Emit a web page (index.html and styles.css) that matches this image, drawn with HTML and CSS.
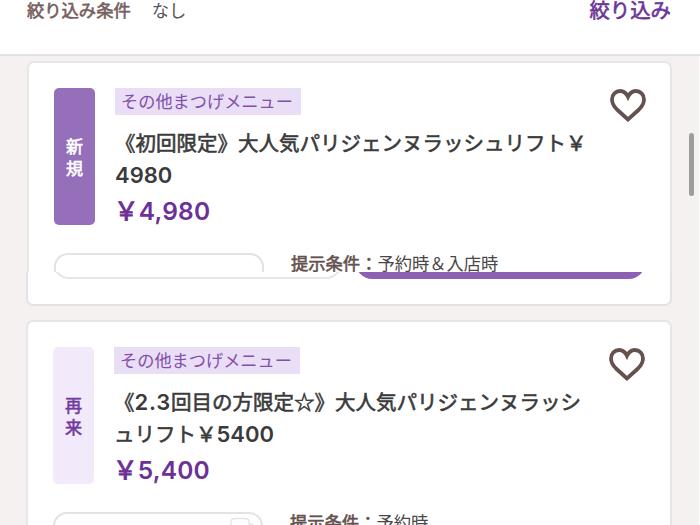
FILE: index.html
```html
<!DOCTYPE html>
<html lang="ja">
<head>
<meta charset="utf-8">
<title>メニュー</title>
<link rel="stylesheet" href="styles.css">
</head>
<body>
<header class="filter">
  <span class="filter-label">絞り込み条件</span>
  <span class="filter-value">なし</span>
  <a class="filter-link">絞り込み</a>
</header>
<main class="list">
  <article class="card card-first">
    <div class="card-top">
      <div class="summary">
        <div class="badge badge-new">新<br>規</div>
        <div class="info">
          <span class="tag">その他まつげメニュー</span>
          <h2 class="title">《初回限定》大人気パリジェンヌラッシュリフト￥<br><span class="num">4980</span></h2>
          <p class="price"><span class="yen">￥</span>4,980</p>
        </div>
        <svg class="heart" viewBox="0 0 36 34"><path d="M18 30.500L7 20.500C3.500 17 2 14 2 10.500C2 5.500 5.600 2 10.200 2C13.500 2 16.300 4.200 18 7.800C19.700 4.200 22.500 2 25.800 2C30.400 2 34 5.500 34 10.500C34 14 32.500 17 29 20.500Z"/></svg>
      </div>
      <div class="details">
        <div class="photo"></div>
        <p class="terms"><b>提示条件：</b>予約時＆入店時</p>
      </div>
    </div>
    <div class="card-bottom">
      <div class="buttons">
        <div class="button button-plain"></div>
        <div class="button button-fill"></div>
      </div>
    </div>
  </article>
  <article class="card card-second">
    <div class="summary">
      <div class="badge badge-repeat">再<br>来</div>
      <div class="info">
        <span class="tag">その他まつげメニュー</span>
        <h2 class="title">《<span class="num wide">2.3</span>回目の方限定☆》大人気パリジェンヌラッシ<br>ュリフト￥<span class="num">5400</span></h2>
        <p class="price"><span class="yen">￥</span>5,400</p>
      </div>
      <svg class="heart" viewBox="0 0 36 34"><path d="M18 30.500L7 20.500C3.500 17 2 14 2 10.500C2 5.500 5.600 2 10.200 2C13.500 2 16.300 4.200 18 7.800C19.700 4.200 22.500 2 25.800 2C30.400 2 34 5.500 34 10.500C34 14 32.500 17 29 20.500Z"/></svg>
    </div>
    <div class="details">
      <div class="photo"><svg class="copy" viewBox="0 0 26 14"><path d="M1 14V5Q1 1.500 4.500 1.500H15.500Q19 1.500 19 5V14M19 7H21Q24 7 24 10V14"/></svg></div>
      <p class="terms"><b>提示条件：</b>予約時</p>
    </div>
  </article>
  <div class="scrollbar"></div>
</main>
</body>
</html>
```
FILE: styles.css
```css
* { box-sizing: border-box; }
body {
  margin: 0;
  width: 700px;
  height: 525px;
  overflow: hidden;
  background: #fff;
  font-family: "Noto Sans CJK JP", sans-serif;
  color: #3b3b3b;
}
.filter {
  display: flex;
  height: 56px;
  padding: 0 29px 0 27px;
  border-bottom: 2px solid #e3e1e4;
  font-size: 17.3px;
  line-height: 20px;
  white-space: nowrap;
}
.filter-label, .filter-link, .title, .badge, .yen, .terms b {
  font-weight: 400;
  -webkit-text-stroke: 0.6px currentColor;
}
.filter-label { color: #75605e; }
.filter-value { margin-left: 21px; color: #555; }
.filter-link { margin-left: auto; font-size: 20.4px; line-height: 19px; color: #6d3497; }
.list {
  position: relative;
  height: 469px;
  margin-right: 1px;
  padding: 5px 0 0 26px;
  background: #f5f1f0;
}
.card { width: 646px; }
.card-first { height: 244px; }
.card-top {
  height: 211px;
  margin-left: 1px;
  padding: 25px 24px 0 25px;
  overflow: hidden;
  background: #fff;
  border: 2px solid #e6e5e8;
  border-bottom: 0;
  border-radius: 7px 7px 0 0;
}
.card-bottom {
  height: 34px;
  padding: 0 25px;
  background: #fff;
  border: 2px solid #e3e2e6;
  border-top: 0;
  border-radius: 0 0 7px 7px;
}
.buttons { display: flex; align-items: flex-end; justify-content: space-between; height: 7px; overflow: hidden; }
.button { width: 289px; height: 40px; border-radius: 16px; }
.button-plain { border: 2px solid #e6e5e8; }
.button-fill { background: #8d60b4; }
.card-second {
  height: 205px;
  margin-top: 15px;
  padding: 25px 24px 0 25px;
  overflow: hidden;
  background: #fff;
  border: 2px solid #e6e5e8;
  border-bottom: 0;
  border-radius: 7px 7px 0 0;
}
.summary { display: flex; height: 138px; }
.badge {
  flex: none;
  width: 41px;
  height: 137px;
  padding-top: 47px;
  border-radius: 5px;
  font-size: 17px;
  line-height: 22px;
  text-align: center;
}
.badge-new { background: #966fba; color: #fff; }
.badge-repeat { background: #f2eafa; color: #713a9c; }
.info { flex: none; width: 480px; margin-left: 20px; white-space: nowrap; }
.tag {
  display: block;
  width: 186px;
  height: 27px;
  padding-left: 6px;
  background: #e9def5;
  color: #8250aa;
  font-size: 17.2px;
  line-height: 25px;
}
.title { margin: 11px 0 0; font-size: 20.5px; line-height: 32px; }
.num, .price { font-family: Inter, "Noto Sans CJK JP", sans-serif; font-weight: 600; }
.num { font-size: 22px; line-height: 20px; -webkit-text-stroke: 0; }
.wide { letter-spacing: 0.8px; }
.price { margin: 5px 0 0; font-size: 24.5px; line-height: 32px; letter-spacing: 0.2px; color: #6c3197; }
.yen { margin-left: -1px; font-family: "Noto Sans CJK JP", sans-serif; line-height: 20px; -webkit-text-stroke-width: 1px; }
.heart { flex: none; width: 36px; height: 34px; margin: 1px 0 0 15px; fill: none; stroke: #65524f; stroke-width: 3.8; }
.details { display: flex; margin-top: 27px; }
.photo { display: flex; justify-content: flex-end; width: 210px; height: 60px; padding-right: 5px; border: 2px solid #e3e2e6; border-radius: 14px; }
.copy { width: 26px; height: 14px; margin-top: 3px; fill: none; stroke: #e7e5e7; stroke-width: 1.5; }
.terms { margin: 0 0 0 27px; font-size: 17.3px; line-height: 20px; color: #4b4747; white-space: nowrap; }
.terms b { color: #65514f; }
.scrollbar { position: absolute; top: 77px; right: 5px; width: 5px; height: 63px; border-radius: 3px; background: #9f9c9b; }
```
